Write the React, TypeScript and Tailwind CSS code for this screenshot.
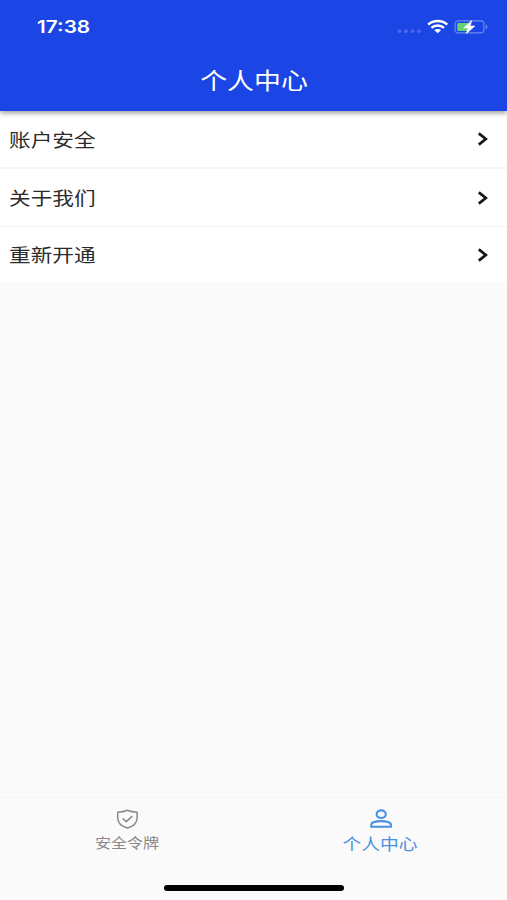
const FONT = "font-['Noto_Sans_CJK_SC',sans-serif]"

const rows = [
  { label: '账户安全', className: 'h-[58px] border-b-2 border-[#f5f5f5]' },
  { label: '关于我们', className: 'h-[58px] border-b border-[#f2f2f2]' },
  { label: '重新开通', className: 'h-[55px]' },
]

function StatusIcons() {
  return (
    <svg width="92" height="16" viewBox="0 0 92 16" fill="none">
      <g fill="#4a68ec">
        <circle cx="3.5" cy="12.2" r="1.9" />
        <circle cx="10" cy="12.2" r="1.9" />
        <circle cx="16.5" cy="12.2" r="1.9" />
        <circle cx="23" cy="12.2" r="1.9" />
      </g>
      <g stroke="#fff" strokeWidth="2.5">
        <path d="M32.2 5.7C37.3 0.8 46.1 0.8 51.2 5.7" />
        <path d="M35.4 8.9C38.8 5.8 44.6 5.8 48 8.9" />
      </g>
      <path d="M38.3 11.1C40.1 9.6 43.3 9.6 45.1 11.1L41.7 14.2Z" fill="#fff" />
      <rect x="59.1" y="1.9" width="28.8" height="12" rx="3.2" stroke="#6f8af2" strokeWidth="1.1" />
      <path d="M89.6 5.3C92 6.2 92 9.6 89.6 10.5Z" fill="#6f8af2" />
      <rect x="61.2" y="3.9" width="12" height="8" rx="1.2" fill="#65d36e" />
      <path
        d="M75.8 1.4L67.7 8.9H72.2L70.2 14.7L78.9 7H74.1Z"
        fill="#fff"
        stroke="#fff"
        strokeWidth="0.6"
      />
    </svg>
  )
}

function Chevron() {
  return (
    <svg width="12" height="14" viewBox="0 0 12 14" fill="none" stroke="#171717" strokeWidth="2.7">
      <path d="M1.8 1.4L8.8 7L1.8 12.6" />
    </svg>
  )
}

function ShieldIcon() {
  return (
    <svg width="22" height="20" viewBox="0 0 22 20" fill="none" stroke="#8a8a8a" strokeLinejoin="round">
      <path
        d="M11.4 1.3C8.6 2.6 5.4 3.2 1.7 3.3V8.8C1.7 13.7 5.7 17.4 11.4 19C17.1 17.4 21.1 13.7 21.1 8.8V3.3C17.4 3.2 14.2 2.6 11.4 1.3Z"
        strokeWidth="1.5"
      />
      <path d="M6.7 9.4L10.2 12.6L16.3 7.1" strokeWidth="1.5" />
    </svg>
  )
}

function PersonIcon() {
  return (
    <svg width="22" height="19" viewBox="0 0 22 19" fill="none" stroke="#4a90e2" strokeWidth="2.1">
      <ellipse cx="11.2" cy="5.2" rx="4.6" ry="3.8" />
      <path d="M1.3 17.8V15.7C1.3 13 6.4 12.1 11.2 12.1S20.9 13 20.9 15.7V17.8Z" />
    </svg>
  )
}

export default function App() {
  return (
    <div className={`flex h-[900px] w-[507px] flex-col overflow-hidden bg-[#fafafa] ${FONT}`}>
      <header className="relative z-10 h-[111px] shrink-0 bg-[#1b45e5] text-white shadow-[0_2px_5px_rgba(0,0,0,0.4)]">
        <div className="flex h-[53px] items-center justify-between pl-[37px] pr-[19px]">
          <span className="origin-left scale-x-[1.22] pt-px font-[Inter,sans-serif] text-[17px] leading-none font-semibold">
            17:38
          </span>
          <StatusIcons />
        </div>
        <h1 className="flex h-[53px] items-center justify-center pl-px text-[23px] leading-none font-normal">
          <span className="scale-x-[1.17]">个人中心</span>
        </h1>
      </header>

      <main className="flex-1">
        {rows.map((row) => (
          <div
            key={row.label}
            className={`flex items-center justify-between bg-white pr-[18px] pl-[9px] text-[#2b2b2b] ${row.className}`}
          >
            <span className="origin-left scale-x-[1.17] text-[18.5px] leading-none">{row.label}</span>
            <Chevron />
          </div>
        ))}
      </main>

      <nav className="flex h-[103px] shrink-0 border-t border-[#f5f5f5] pt-[11px]">
        <div className="flex flex-1 flex-col items-center text-[#888]">
          <ShieldIcon />
          <span className="mt-1 scale-x-[1.14] text-[14px] leading-[18px]">安全令牌</span>
        </div>
        <div className="flex flex-1 flex-col items-center pl-px text-[#4a90e2]">
          <PersonIcon />
          <span className="mt-[6px] scale-x-[1.17] text-[16px] leading-[18px]">个人中心</span>
        </div>
      </nav>
      <div className="relative">
        <div className="absolute bottom-[9px] left-[164px] h-[6px] w-[180px] rounded-full bg-black" />
      </div>
    </div>
  )
}
